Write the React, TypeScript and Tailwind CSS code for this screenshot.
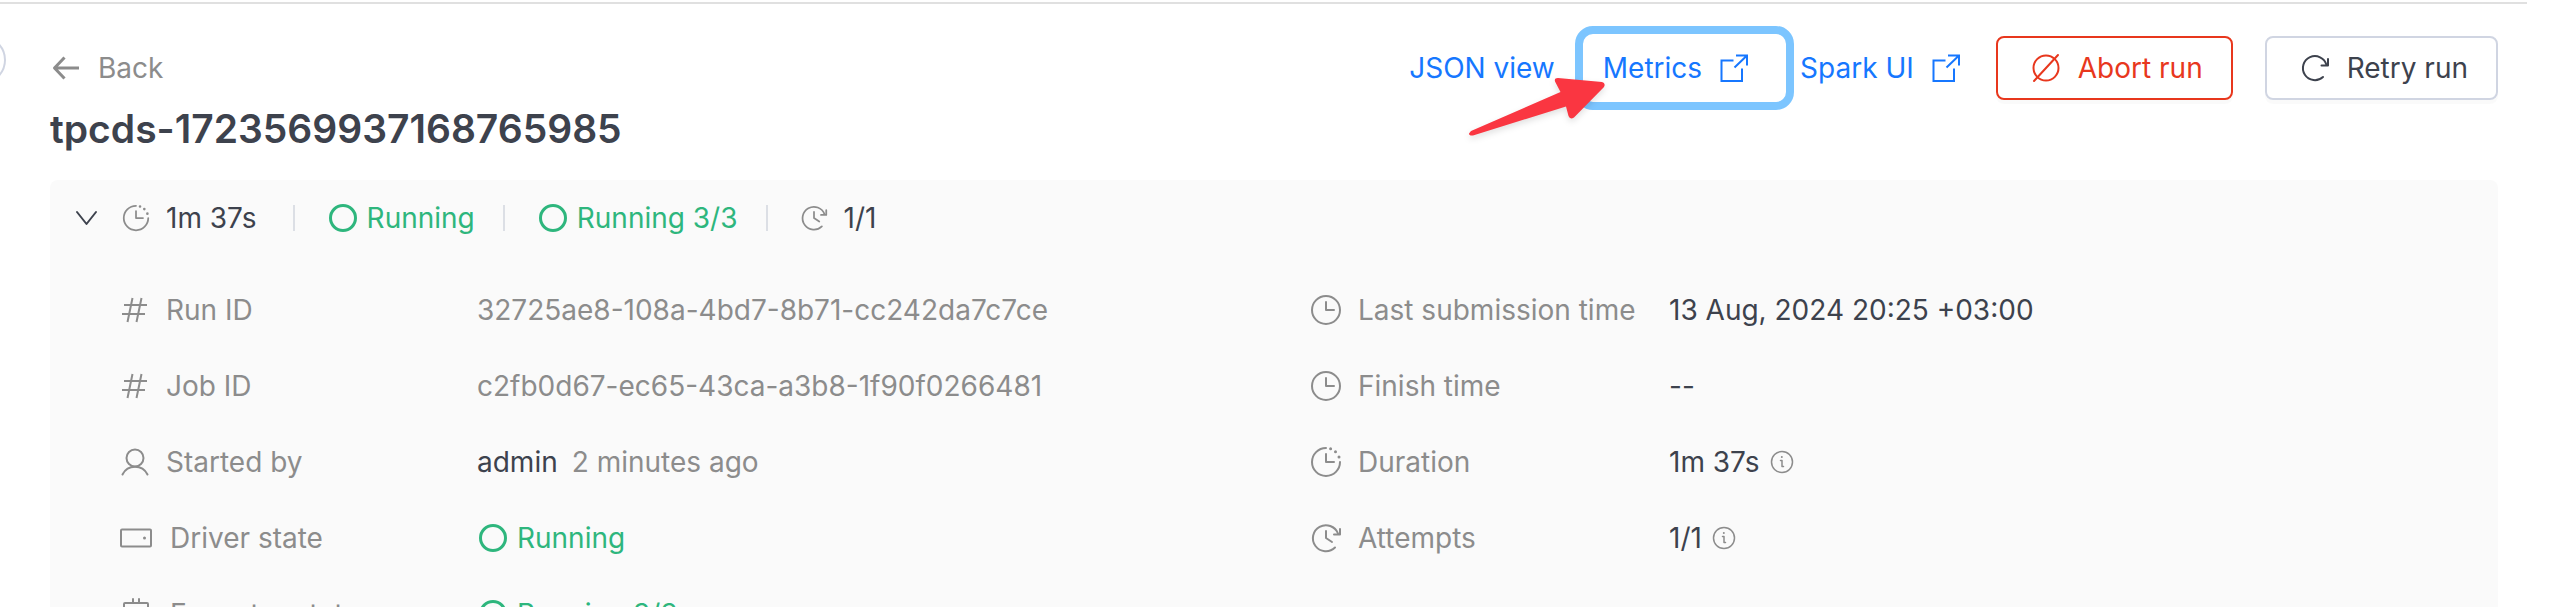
import type { ReactNode } from "react";

function Svg({ size = "size-8", box = 32, width = 2, children }: { size?: string; box?: number; width?: number; children: ReactNode }) {
  return (
    <svg className={`${size} shrink-0`} viewBox={`0 0 ${box} ${box}`} fill="none" stroke="currentColor" strokeWidth={width} strokeLinecap="round" strokeLinejoin="round" aria-hidden="true">
      {children}
    </svg>
  );
}

const ExternalIcon = () => (
  <Svg><path d="M15.500 8.500H3.500V29H24V16.500M18 3.500h11v10M29 3.500 16.500 15.500" strokeLinecap="butt" strokeLinejoin="miter" /></Svg>
);
const DurationIcon = ({ size = "size-8" }: { size?: string }) => (
  <Svg size={size}>
    <path d="M16 2A14 14 0 1 0 30 16" />
    <path d="M16 8v8h8" />
    <path d="M20.600 2.800v0M25.500 5.800v0M29 11v0" strokeWidth="3" />
  </Svg>
);
const AttemptIcon = ({ size = "size-8" }: { size?: string }) => (
  <Svg size={size}>
    <path d="M25 25.500A13 13 0 1 1 28 11.500" />
    <path d="M30 7v5.500h-6" />
    <path d="M16 9v7l6 4" />
  </Svg>
);
const ClockIcon = () => (
  <Svg><circle cx="16" cy="16" r="14" /><path d="M16 8v8h8" /></Svg>
);
const HashIcon = () => (
  <Svg><path d="M6 11h23M4 20h23M14.500 4l-5 24M23.500 4l-5 24" strokeLinecap="butt" /></Svg>
);
const UserIcon = () => (
  <Svg><circle cx="17" cy="12" r="8.500" /><path d="M4.500 28.500a14 14 0 0 1 25 0" /></Svg>
);
const DriverIcon = () => (
  <Svg size="size-9" box={36}><rect x="3" y="9.500" width="30" height="17" rx="1" /><path d="M26.500 18v0" strokeWidth="3" /></Svg>
);
const ExecutorIcon = () => (
  <Svg size="size-9" box={36}><rect x="6" y="7" width="24" height="23" rx="1" /><path d="M15 3v4M21 3v4M15 30v3M21 30v3" /></Svg>
);
const InfoIcon = () => (
  <span className="text-[#8c8c8c]">
    <Svg size="size-6" box={24} width={1.5}>
      <circle cx="12" cy="12" r="10.500" />
      <path d="M10.500 10.500H12v6h1.500" />
      <path d="M11.800 7v0" strokeWidth="2" />
    </Svg>
  </span>
);

function Running({ text = "Running" }: { text?: string }) {
  return (
    <span className="flex items-center gap-2 text-[#2eb67d]">
      <Svg width={3}><circle cx="16" cy="16" r="12.500" /></Svg>
      {text}
    </span>
  );
}

function Row({ icon, label, children }: { icon: ReactNode; label: string; children: ReactNode }) {
  return (
    <div className="flex h-9 items-center">
      <dt className="flex w-[359px] shrink-0 items-center gap-4 text-[#8c8c8c]">
        {icon}
        {label}
      </dt>
      <dd className="flex items-center gap-[10px]">{children}</dd>
    </div>
  );
}

const Divider = () => <span className="h-[26px] w-[2px] bg-[#dcdfe5]" />;

export default function App() {
  return (
    <div className="relative h-screen overflow-hidden bg-white font-['Inter',sans-serif] text-[28px] leading-9 text-[#3d424d]">
      <div className="mr-8 mt-[2px] h-[2px] bg-[#e0e0e0]" />
      <button aria-label="Collapse sidebar" className="absolute -left-[42px] top-9 size-12 rounded-full border-2 border-[#d0d5e2] bg-white" />

      <header className="flex items-start justify-between pl-[50px] pr-[61px] pt-8">
        <div>
          <a href="#back" className="flex h-16 items-center gap-4 text-[#8c8c8c]">
            <Svg><path d="M29 16H5M14.500 5.500 4.500 16l10 10.500" strokeWidth="3" strokeLinecap="butt" /></Svg>
            Back
          </a>
          <h1 className="text-[39px] font-semibold leading-[58px]">tpcds-1723569937168765985</h1>
        </div>
        <nav className="flex items-center text-[#1677ff]">
          <a href="#json" className="mr-5">JSON view</a>
          <a href="#metrics" className="relative -my-[10px] mr-[6px] flex h-[84px] items-center gap-4 rounded-[18px] border-8 border-[#7cc5ff] pl-5 pr-9">
            Metrics
            <ExternalIcon />
            <svg className="absolute -left-[120px] top-10 h-20 w-40 overflow-visible drop-shadow-md" viewBox="0 0 160 80" aria-hidden="true">
              <path d="M8 57 97.500 18 92 7.500Q91 4 95 4L139 8Q143 9 141 13L111 43.500Q107 46 105.500 42L103 32.500 10 61.500Q6 62 6 59.500Z" fill="#fa3641" />
            </svg>
          </a>
          <a href="#spark" className="mr-[34px] flex items-center gap-4">Spark UI<ExternalIcon /></a>
          <button className="mr-8 flex h-16 items-center gap-4 rounded-lg border-2 border-[#e8371d] pl-8 pr-7 text-[#e8371d] shadow-[0_4px_0_rgba(0,0,0,0.02)]">
            <Svg><circle cx="16" cy="16" r="12.500" /><path d="M28 3 4 29" /></Svg>
            Abort run
          </button>
          <button className="flex h-16 items-center gap-4 rounded-lg border-2 border-[#d0d5e2] pl-8 pr-7 text-[#3d424d] shadow-[0_4px_0_rgba(0,0,0,0.02)]">
            <Svg><path d="M24 25A12 12 0 1 1 27.500 13" /><path d="M29 7v6.500h-6.500" /></Svg>
            Retry run
          </button>
        </nav>
      </header>

      <section className="ml-[50px] mr-[61px] mt-[22px] rounded-lg bg-[#fafafa] px-6 pb-10 pt-5">
        <div className="flex h-9 items-center">
          <button aria-label="Collapse details" className="mr-4">
            <Svg><path d="m3 10 9.500 12L22 10" /></Svg>
          </button>
          <span className="mr-9 flex items-center gap-4"><span className="text-[#8c8c8c]"><DurationIcon size="size-7" /></span>1m 37s</span>
          <Divider />
          <span className="ml-8 mr-7"><Running /></span>
          <Divider />
          <span className="ml-8 mr-7"><Running text="Running 3/3" /></span>
          <Divider />
          <span className="ml-8 flex items-center gap-4"><span className="text-[#8c8c8c]"><AttemptIcon size="size-7" /></span>1/1</span>
        </div>

        <div className="mt-14 grid grid-cols-[1192px_1fr] pl-11">
          <dl className="flex flex-col gap-10">
            <Row icon={<HashIcon />} label="Run ID"><span className="text-[#8c8c8c]">32725ae8-108a-4bd7-8b71-cc242da7c7ce</span></Row>
            <Row icon={<HashIcon />} label="Job ID"><span className="text-[#8c8c8c]">c2fb0d67-ec65-43ca-a3b8-1f90f0266481</span></Row>
            <Row icon={<UserIcon />} label="Started by"><span className="mr-1">admin</span><span className="text-[#8c8c8c]">2 minutes ago</span></Row>
            <Row icon={<DriverIcon />} label="Driver state"><Running /></Row>
            <Row icon={<ExecutorIcon />} label="Executor state"><Running text="Running 3/3" /></Row>
          </dl>
          <dl className="flex flex-col gap-10">
            <Row icon={<ClockIcon />} label="Last submission time">13 Aug, 2024 20:25 +03:00</Row>
            <Row icon={<ClockIcon />} label="Finish time">--</Row>
            <Row icon={<DurationIcon />} label="Duration">1m 37s <InfoIcon /></Row>
            <Row icon={<AttemptIcon />} label="Attempts">1/1 <InfoIcon /></Row>
          </dl>
        </div>
      </section>
    </div>
  );
}
